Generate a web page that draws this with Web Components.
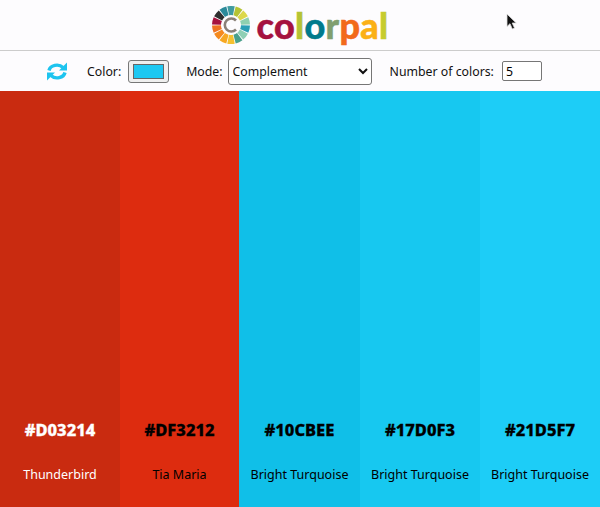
<!DOCTYPE html>
<html>
<head>
<meta charset="utf-8">
<title>colorpal</title>
<style>
  html, body { margin: 0; height: 100%; overflow: hidden; }
  body { font-family: "Noto Sans", "DejaVu Sans", sans-serif; background: #fdfcfe; }
  colorpal-app { height: 507px; }
</style>
</head>
<body>
<colorpal-app>
  <colorpal-header></colorpal-header>
  <colorpal-toolbar></colorpal-toolbar>
  <colorpal-palette>
    <colorpal-swatch hex="#D03214" name="Thunderbird" color="#c92b10" ink="#fff"></colorpal-swatch>
    <colorpal-swatch hex="#DF3212" name="Tia Maria" color="#dd2c0f" ink="#000"></colorpal-swatch>
    <colorpal-swatch hex="#10CBEE" name="Bright Turquoise" color="#10bfe8" ink="#000"></colorpal-swatch>
    <colorpal-swatch hex="#17D0F3" name="Bright Turquoise" color="#17c8f0" ink="#000"></colorpal-swatch>
    <colorpal-swatch hex="#21D5F7" name="Bright Turquoise" color="#1dcdf7" ink="#000"></colorpal-swatch>
  </colorpal-palette>
  <svg style="position:absolute;left:505px;top:13px" width="13" height="18" viewBox="0 0 13 18">
    <path d="M2 1v12.500l3-2.800 2.300 5.300 2.200-1-2.300-5h4z" fill="#111" stroke="#ddd" stroke-width=".8"/>
  </svg>
</colorpal-app>

<script>
class ColorpalApp extends HTMLElement {
  constructor() {
    super();
    this.attachShadow({mode: 'open'}).innerHTML = `
      <style>
        :host { display: flex; flex-direction: column; position: relative; width: 600px; }
      </style>
      <slot></slot>`;
  }
}

class ColorpalHeader extends HTMLElement {
  constructor() {
    super();
    // wheel segments, clockwise from the top
    const colors = ['#3f9aa0', '#b5c334', '#dcd84a', '#8fd0b0', '#2b9fb5', '#8fcfb5', '#4aa08c', '#f5c030', '#f7a823', '#f58a1f', '#ee7322', '#a5123f', '#2f2f2f', '#2b8a9a'];
    const step = 360 / colors.length;
    const pt = (r, deg) => {
      const t = (deg - 90) * Math.PI / 180;
      return (r * Math.cos(t)).toFixed(2) + ' ' + (r * Math.sin(t)).toFixed(2);
    };
    const wedges = colors.map((c, i) => {
      const a = i * step - step / 2 + 1.5;
      const b = i * step + step / 2 - 1.5;
      return `<path d="M${pt(10, a)}L${pt(19, a)}A19 19 0 0 1 ${pt(19, b)}L${pt(10, b)}A10 10 0 0 0 ${pt(10, a)}z" fill="${c}"/>`;
    }).join('');
    this.attachShadow({mode: 'open'}).innerHTML = `
      <style>
        :host { display: flex; justify-content: center; align-items: center; gap: 7px; height: 51px; box-sizing: border-box; border-bottom: 1px solid #ccc; background: #fdfcfe; }
        .word { font: 900 36px/1 "Lato", sans-serif; letter-spacing: .3px; margin-top: -1px; -webkit-text-stroke: .5px currentColor; }
      </style>
      <svg width="38" height="38" viewBox="-19 -19 38 38">
        ${wedges}
        <path d="M5 -4.500A6.500 6.500 0 1 0 5 4.500" fill="none" stroke="#8a8078" stroke-width="2.600"/>
      </svg>
      <span class="word"><span style="color:#a5123f">c</span><span style="color:#a5123f">o</span><span style="color:#b5c334">l</span><span style="color:#007a8c">o</span><span style="color:#7f9f70">r</span><span style="color:#f26a1b">p</span><span style="color:#fbb016">a</span><span style="color:#c6cc2e">l</span></span>`;
  }
}

class ColorpalToolbar extends HTMLElement {
  constructor() {
    super();
    this.attachShadow({mode: 'open'}).innerHTML = `
      <style>
        :host { display: flex; align-items: center; height: 40px; box-sizing: border-box; padding-left: 46px; font-size: 12.300px; color: #111; background: #fdfcfe; }
        svg { margin-right: 19px; }
        label { display: flex; align-items: center; gap: 7px; }
        .color { margin-right: 17px; }
        .mode { margin-right: 18px; gap: 5px; }
        .count { gap: 8px; }
        .pick { display: block; box-sizing: border-box; width: 41px; height: 23px; padding: 3px 4px; border: 1px solid #777; border-radius: 3px; background: #efefef; }
        .pick i { display: block; height: 100%; background: #1dc8f2; border: 1px solid #666; box-sizing: border-box; }
        select { width: 144px; height: 27px; font: inherit; color: #111; background: #fff; border: 1px solid #767676; border-radius: 3px; padding: 0; }
        input { width: 40px; height: 20px; box-sizing: border-box; font: inherit; border: 1px solid #767676; border-radius: 2px; padding: 0 3px; background: #fff; }
      </style>
      <svg width="22" height="21" viewBox="0 0 22 21" fill="none" stroke="#1dc4ef" stroke-width="3.400">
        <path d="M3 9.500a8 6.500 0 0 1 14-3"/>
        <path d="M19 11.500a8 6.500 0 0 1-14 3"/>
        <path d="M21 1.500v8h-8z" fill="#1dc4ef" stroke="none"/>
        <path d="M1 19.500v-8h8z" fill="#1dc4ef" stroke="none"/>
      </svg>
      <label class="color">Color: <span class="pick"><i></i></span></label>
      <label class="mode">Mode:
        <select><option>Complement</option></select>
      </label>
      <label class="count">Number of colors: <input type="text" value="5"></label>`;
  }
}

class ColorpalPalette extends HTMLElement {
  constructor() {
    super();
    this.attachShadow({mode: 'open'}).innerHTML = `
      <style>
        :host { display: grid; grid-template-columns: 120px 119px 121px 120px 120px; flex: 1; }
      </style>
      <slot></slot>`;
  }
}

class ColorpalSwatch extends HTMLElement {
  constructor() {
    super();
    this.attachShadow({mode: 'open'}).innerHTML = `
      <style>
        :host { display: flex; flex-direction: column; align-items: center; justify-content: flex-end; height: 416px; padding-bottom: 24px; box-sizing: border-box; }
        h2 { margin: 0 0 25px; font-size: 16.500px; font-weight: 800; line-height: 22px; -webkit-text-stroke: .3px currentColor; }
        p { margin: 0; font-size: 12.500px; line-height: 17px; }
      </style>
      <h2 id="hex"></h2>
      <p id="name"></p>`;
  }

  connectedCallback() {
    this.style.background = this.getAttribute('color');
    this.style.color = this.getAttribute('ink');
    this.shadowRoot.querySelector('#hex').textContent = this.getAttribute('hex');
    this.shadowRoot.querySelector('#name').textContent = this.getAttribute('name');
  }
}

window.customElements.define('colorpal-app', ColorpalApp);
window.customElements.define('colorpal-header', ColorpalHeader);
window.customElements.define('colorpal-toolbar', ColorpalToolbar);
window.customElements.define('colorpal-palette', ColorpalPalette);
window.customElements.define('colorpal-swatch', ColorpalSwatch);
</script>
</body>
</html>
